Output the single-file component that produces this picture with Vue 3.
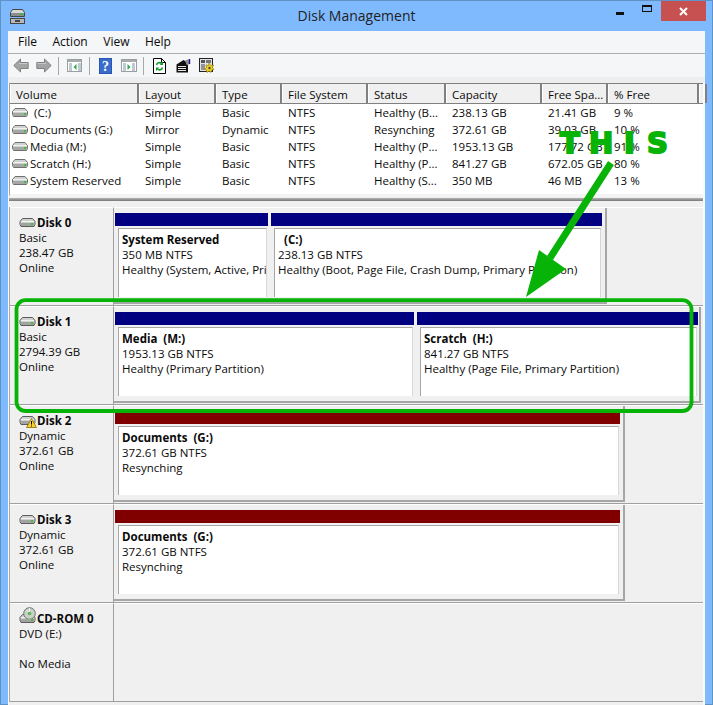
<script setup>
const columns = [
  { label: 'Volume', width: 129 },
  { label: 'Layout', width: 77 },
  { label: 'Type', width: 66 },
  { label: 'File System', width: 86 },
  { label: 'Status', width: 78 },
  { label: 'Capacity', width: 96 },
  { label: 'Free Spa...', width: 66 },
  { label: '% Free', width: 91 },
  { label: '', width: 4 }
]
const gridTemplate = columns.map(c => c.width + 'px').join(' ')
const volumes = [
  ['(C:)', 'Simple', 'Basic', 'NTFS', 'Healthy (B...', '238.13 GB', '21.41 GB', '9 %'],
  ['Documents (G:)', 'Mirror', 'Dynamic', 'NTFS', 'Resynching', '372.61 GB', '39.03 GB', '10 %'],
  ['Media (M:)', 'Simple', 'Basic', 'NTFS', 'Healthy (P...', '1953.13 GB', '177.72 GB', '91 %'],
  ['Scratch (H:)', 'Simple', 'Basic', 'NTFS', 'Healthy (P...', '841.27 GB', '672.05 GB', '80 %'],
  ['System Reserved', 'Simple', 'Basic', 'NTFS', 'Healthy (S...', '350 MB', '46 MB', '13 %']
]
const disks = [
  { name: 'Disk 0', info: ['Basic', '238.47 GB', 'Online'], width: 493, parts: [
    { w: 153, title: 'System Reserved', size: '350 MB NTFS', status: 'Healthy (System, Active, Primary Partition)' },
    { w: 331, title: '(C:)', size: '238.13 GB NTFS', status: 'Healthy (Boot, Page File, Crash Dump, Primary Partition)', indent: true }
  ] },
  { name: 'Disk 1', info: ['Basic', '2794.39 GB', 'Online'], width: 587, parts: [
    { w: 299, title: 'Media  (M:)', size: '1953.13 GB NTFS', status: 'Healthy (Primary Partition)' },
    { w: 281, title: 'Scratch  (H:)', size: '841.27 GB NTFS', status: 'Healthy (Page File, Primary Partition)' }
  ] },
  { name: 'Disk 2', warn: true, info: ['Dynamic', '372.61 GB', 'Online'], width: 511, parts: [
    { w: 505, red: true, title: 'Documents  (G:)', size: '372.61 GB NTFS', status: 'Resynching' }
  ] },
  { name: 'Disk 3', info: ['Dynamic', '372.61 GB', 'Online'], width: 511, parts: [
    { w: 505, red: true, title: 'Documents  (G:)', size: '372.61 GB NTFS', status: 'Resynching' }
  ] },
  { name: 'CD-ROM 0', cd: true, info: ['DVD (E:)', '', 'No Media'], width: 0, parts: [] }
]
</script>

<template>
  <div class="page">
    <header class="titlebar">
      <svg class="app-icon" width="17" height="17" viewBox="0 0 17 17">
        <path d="M3.500 1.500h10l2 3v4h-14v-4z" fill="#d4d8d8" stroke="#444"/>
        <rect x="2" y="5" width="13" height="3" fill="#8c8c8c"/>
        <rect x="11" y="5" width="3" height="2" fill="#3bb54a"/>
        <rect x="1.500" y="10.500" width="14" height="5" fill="#b8b8b8" stroke="#444"/>
        <rect x="6" y="12" width="5" height="2" fill="#444"/>
      </svg>
      <span class="title-text">Disk Management</span>
      <div class="controls">
        <span class="ctl"><i class="min"></i></span>
        <span class="ctl"><i class="max"></i></span>
        <span class="close">
          <svg width="9" height="9" viewBox="0 0 9 9"><path d="M1 1l7 7M8 1L1 8" stroke="#fff" stroke-width="2"/></svg>
        </span>
      </div>
    </header>

    <main class="client">
      <nav class="menu">
        <span>File</span><span>Action</span><span>View</span><span>Help</span>
      </nav>

      <div class="toolbar">
        <svg class="tool" width="16" height="15" viewBox="0 0 16 15"><path d="M7.500 1L.8 7.500 7.500 14v-3.500h7.700v-6H7.500z" fill="#a4a4a4" stroke="#808080"/><path d="M6 5.500h8.500" stroke="#c8c8c8"/></svg>
        <svg class="tool gap7" width="16" height="15" viewBox="0 0 16 15"><path d="M8.500 1l6.700 6.500L8.500 14v-3.500H.8v-6h7.700z" fill="#a4a4a4" stroke="#808080"/><path d="M1.500 5.500H10" stroke="#c8c8c8"/></svg>
        <i class="sep gap6"></i>
        <svg class="tool gap8" width="15" height="13" viewBox="0 0 15 13">
          <rect x=".5" y=".5" width="14" height="12" fill="#fff" stroke="#9aa0a0"/>
          <rect x="1" y="1" width="13" height="2" fill="#a8acac"/>
          <path d="M2 5h3M2 7h3M2 9h3M2 11h3M11 5h3M11 7h3M11 9h3M11 11h3" stroke="#7f95a8"/>
          <path d="M9.500 5v6L6.500 8z" fill="#2da84a"/>
        </svg>
        <i class="sep gap7"></i>
        <svg class="tool gap9" width="13" height="16" viewBox="0 0 13 16">
          <rect width="13" height="16" fill="#2b55b5"/>
          <rect x="1" y="1" width="11" height="14" fill="#3a6ccb"/>
          <text x="6.500" y="13" class="help-q">?</text>
        </svg>
        <svg class="tool gap9" width="16" height="13" viewBox="0 0 16 13">
          <rect x=".5" y=".5" width="15" height="12" fill="#fff" stroke="#9aa0a0"/>
          <rect x="1" y="1" width="14" height="2" fill="#a8acac"/>
          <path d="M2 5h3M2 7h3M2 9h3M2 11h3M11 5h3M11 7h3M11 9h3M11 11h3" stroke="#7f95a8"/>
          <path d="M6.500 5v6l3-3z" fill="#2da84a"/>
        </svg>
        <i class="sep gap6"></i>
        <svg class="tool gap9" width="13" height="16" viewBox="0 0 13 16">
          <path d="M.5.500h8l4 4v11H.5z" fill="#fff" stroke="#000"/>
          <path d="M8.500.500v4h4" fill="none" stroke="#000"/>
          <path d="M3.500 7a3 3 0 0 1 5-1.500M9.500 9.500a3 3 0 0 1-5 1.500" fill="none" stroke="#129a2a" stroke-width="1.600"/>
          <path d="M10 3.500v3.500H6.800zM3 13V9.500h3.200z" fill="#129a2a"/>
        </svg>
        <svg class="tool gap10" width="15" height="14" viewBox="0 0 15 14">
          <path d="M.5 5.500L7.500 1l3 2v2.500h1.500v8H.5z" fill="#111"/>
          <path d="M2 7.500h8M2 9.500h8M2 11.500h8" stroke="#e4e4e4"/>
          <path d="M9 1.500l3-1 2 .5v4l-2 .5-2-1.500z" fill="#8d8d8d"/>
          <path d="M13.500 0v5" stroke="#14148c" stroke-width="1.400"/>
        </svg>
        <svg class="tool gap8" width="16" height="15" viewBox="0 0 16 15">
          <rect x=".5" y=".5" width="13" height="13" fill="#e4e4e4" stroke="#222"/>
          <rect x="2" y="2" width="4" height="3" fill="#555"/>
          <rect x="7" y="2" width="5" height="3" fill="#777"/>
          <path d="M2 7h4M2 9h4M2 11h4" stroke="#444"/>
          <path d="M10 5l1.500 2.500L14.500 7l-1 2.500 1.500 2-2.500.5-.5 2.500-2-1.500-2 1.500-.5-2.500-2-1 2-1.500-.5-2.500 2.500.5z" fill="#f4d21f" stroke="#8a7300" stroke-width=".6"/>
          <circle cx="10.500" cy="10" r="1.200" fill="#444"/>
        </svg>
      </div>

      <div class="strip"></div>

      <section class="vol-list">
        <div class="vol-head" :style="{ gridTemplateColumns: gridTemplate }">
          <span v-for="c in columns" :key="c.label" class="head-cell">{{ c.label }}</span>
        </div>
        <div v-for="v in volumes" :key="v[0]" class="vol-row" :style="{ gridTemplateColumns: gridTemplate }">
          <span class="vol-name">
            <svg width="16" height="9" viewBox="0 0 16 9">
              <path d="M3 .5h10l2.500 3v3l-1 2h-13l-1-2v-3z" fill="#cfd2d0" stroke="#707070"/>
              <rect x="1" y="3" width="14" height="1" fill="#f0f2f0"/>
              <rect x="1" y="5" width="14" height="3" fill="#a6a8a6"/>
              <rect x="12" y="5" width="2" height="2" fill="#3cc03c"/>
            </svg>
            <span :class="{ gap: v[0] === '(C:)' }">{{ v[0] }}</span>
          </span>
          <span v-for="(cell, i) in v.slice(1)" :key="i" class="vol-cell">{{ cell }}</span>
        </div>
      </section>

      <div class="split"></div>

      <section class="disks">
        <div v-for="d in disks" :key="d.name" class="disk">
          <div class="disk-label">
            <div class="disk-name">
              <span class="disk-icon">
                <svg width="17" height="11" viewBox="0 0 17 11">
                  <path d="M3.500 1.500h10l2.500 3v3l-1 2h-13l-1-2v-3z" fill="#cfd2d0" stroke="#5c5c5c"/>
                  <rect x="2" y="4" width="13" height="1" fill="#f0f2f0"/>
                  <rect x="2" y="6" width="13" height="3" fill="#a2a4a2"/>
                  <rect x="12" y="6" width="2" height="2" fill="#3cc03c"/>
                </svg>
                <svg v-if="d.warn" class="warn" width="11" height="10" viewBox="0 0 11 10">
                  <path d="M5.500.500l5 9H.5z" fill="#f6d32d" stroke="#8a6a00" stroke-width=".8"/>
                  <path d="M5.500 3v3.500M5.500 7.500v1" stroke="#000"/>
                </svg>
                <svg v-if="d.cd" class="cd" width="13" height="12" viewBox="0 0 13 12">
                  <circle cx="6.500" cy="6.500" r="5.800" fill="#c6d2c6" stroke="#6e6e6e"/>
                  <path d="M6.500 1v4M4 3l2 3" stroke="#f4f4f4"/>
                  <circle cx="6.500" cy="6.500" r="1.800" fill="#5fb05f"/>
                </svg>
              </span>
              <strong>{{ d.name }}</strong>
            </div>
            <div v-for="(line, i) in d.info" :key="i" class="disk-line">{{ line }}</div>
          </div>
          <div class="disk-body">
            <div v-if="d.parts.length" class="parts" :style="{ width: d.width + 'px' }">
              <div v-for="p in d.parts" :key="p.title" class="part" :style="{ width: p.w + 'px' }">
                <div class="bar" :class="{ red: p.red }"></div>
                <div class="part-box">
                  <b :class="{ indent: p.indent }">{{ p.title }}</b>
                  <span>{{ p.size }}</span>
                  <span>{{ p.status }}</span>
                </div>
              </div>
            </div>
          </div>
        </div>
      </section>
    </main>

    <svg class="annotation" width="713" height="705" viewBox="0 0 713 705">
      <rect x="16.500" y="300.200" width="675" height="110.800" rx="9" fill="none" stroke="#07b307" stroke-width="3.800"/>
      <path d="M611 163L550 258" stroke="#07b307" stroke-width="7" fill="none"/>
      <path d="M526 297L539 250 L566 269z" fill="#07b307"/>
      <g class="this">
        <text x="560" y="153">T</text>
        <text x="589" y="153">H</text>
        <text x="624" y="153">I</text>
        <text x="647" y="153">S</text>
      </g>
    </svg>
  </div>
</template>

<style>
html, body { margin: 0; background: #7fbaff; }
</style>

<style scoped>
.page {
  position: relative;
  width: 713px;
  height: 705px;
  overflow: hidden;
  background: #7fbaff;
  display: flex;
  flex-direction: column;
  font-family: "Open Sans", "Noto Sans", sans-serif;
  font-size: 11.5px;
  color: #0a0a0a;
  box-shadow: inset 0 0 0 1px #5f93c8;
}
.titlebar {
  height: 31px;
  flex: none;
  display: flex;
  align-items: center;
  position: relative;
  padding-left: 9px;
  box-sizing: border-box;
}
.app-icon { flex: none; margin-top: 1px; }
.title-text {
  position: absolute;
  left: 0;
  right: 0;
  top: 7px;
  text-align: center;
  font-size: 14px;
  line-height: 18px;
  color: #222;
}
.controls {
  position: absolute;
  top: 1px;
  right: 7px;
  display: flex;
  align-items: stretch;
  gap: 1px;
  height: 20px;
}
.ctl { width: 26px; display: flex; align-items: center; justify-content: center; }
.min { display: block; width: 8px; height: 3px; background: #111; margin-top: 5px; }
.max { display: block; box-sizing: border-box; width: 10px; height: 7px; border: 1px solid #111; border-top-width: 2px; margin-top: -5px; }
.close {
  width: 45px;
  background: #c75050;
  display: flex;
  align-items: center;
  justify-content: center;
}
.client {
  margin: 0 8px;
  flex: 1;
  min-height: 0;
  background: #f0f0f0;
  box-shadow: inset 1px 0 #fafafa, inset -2px 0 #fafafa;
  display: flex;
  flex-direction: column;
}
.menu {
  height: 22px;
  flex: none;
  background: #f5f6f7;
  border-bottom: 1px solid #aeaeae;
  display: flex;
  align-items: center;
  padding-left: 10px;
  gap: 15.500px;
  font-size: 12px;
}
.menu span { margin-top: -2px; }
.toolbar {
  height: 23px;
  flex: none;
  background: #f5f6f7;
  display: flex;
  align-items: center;
  padding-left: 5px;
}
.tool { flex: none; }
.gap6 { margin-left: 6px; }
.gap7 { margin-left: 7px; }
.gap8 { margin-left: 8px; }
.gap9 { margin-left: 9px; }
.gap10 { margin-left: 10px; }
.sep { width: 1px; height: 18px; background: #a8a8a8; flex: none; }
.help-q { font: bold 14px "Liberation Serif", serif; fill: #fff; text-anchor: middle; }
.strip { height: 6px; flex: none; background: #eeeeee; }
.vol-list {
  margin: 0 2px 0 1px;
  flex: none;
  border-left: 1px solid #a0a0a0;
  background: #fff;
  height: 111px;
  border-bottom: 3px solid #f4f4f4;
}
.vol-head {
  display: grid;
  height: 19px;
  border-top: 1px solid #808080;
  border-bottom: 1px solid #808080;
  background: #f0f0f0;
}
.head-cell {
  box-sizing: border-box;
  border-right: 2px solid #808080;
  border-left: 1px solid #fff;
  padding-left: 5px;
  line-height: 22px;
  white-space: nowrap;
  overflow: hidden;
}
.vol-row {
  display: grid;
  height: 17px;
  line-height: 17px;
  white-space: nowrap;
}
.vol-name { display: flex; align-items: center; gap: 2px; padding-left: 2px; }
.vol-name .gap { margin-left: 4px; }
.vol-cell { padding-left: 6px; overflow: visible; }
.split {
  margin: 1px 2px 6px 1px;
  height: 3px;
  flex: none;
  background: linear-gradient(#b4b4b4, #787878);
}
.disks {
  margin: 0 2px 0 1px;
  border-left: 1px solid #a8a8a8;
  flex: none;
}
.disk {
  height: 99px;
  display: flex;
  border-bottom: 1px solid #a0a0a0;
  box-sizing: border-box;
  position: relative;
}
.disk-label {
  width: 104px;
  flex: none;
  box-sizing: border-box;
  border-top: 1px solid #fff;
  border-right: 1px solid #a0a0a0;
  padding: 7px 0 0 9px;
  line-height: 15px;
}
.disk-name { display: flex; align-items: center; height: 15px; }
.disk-name strong { font-weight: 700; margin-left: 1px; white-space: nowrap; }
.disk-icon { position: relative; width: 17px; height: 11px; display: block; flex: none; }
.disk-icon svg { display: block; }
.warn { position: absolute; left: 7px; top: 3px; }
.cd { position: absolute; left: 4px; top: -6px; }
.disk-line { height: 15px; white-space: nowrap; }
.disk-body { flex: 1; border-top: 1px solid #fff; min-width: 0; }
.parts {
  box-sizing: border-box;
  height: 96px;
  display: flex;
  gap: 3px;
  padding: 5px 0 0 1px;
  border-right: 2px solid #a6a6a6;
  border-bottom: 2px solid #a6a6a6;
}
.part { display: flex; flex-direction: column; flex: none; }
.bar { height: 13px; background: #000080; flex: none; }
.bar.red { background: #800000; }
.part-box {
  margin: 2px 1px 5px 3px;
  flex: 1;
  background: #fff;
  border: 1px solid #a6a6a6;
  border-right: 1px solid #d8d8d8;
  border-bottom: none;
  padding: 3px 0 0 3px;
  display: flex;
  flex-direction: column;
  line-height: 15px;
  overflow: hidden;
  white-space: pre;
}
.part-box b { font-weight: 700; }
.part-box .indent { margin-left: 6px; }
.annotation { position: absolute; left: 0; top: 0; pointer-events: none; }
.this text { font: 700 29px "DejaVu Sans", sans-serif; fill: #07b307; stroke: #07b307; stroke-width: 2px; }
</style>
